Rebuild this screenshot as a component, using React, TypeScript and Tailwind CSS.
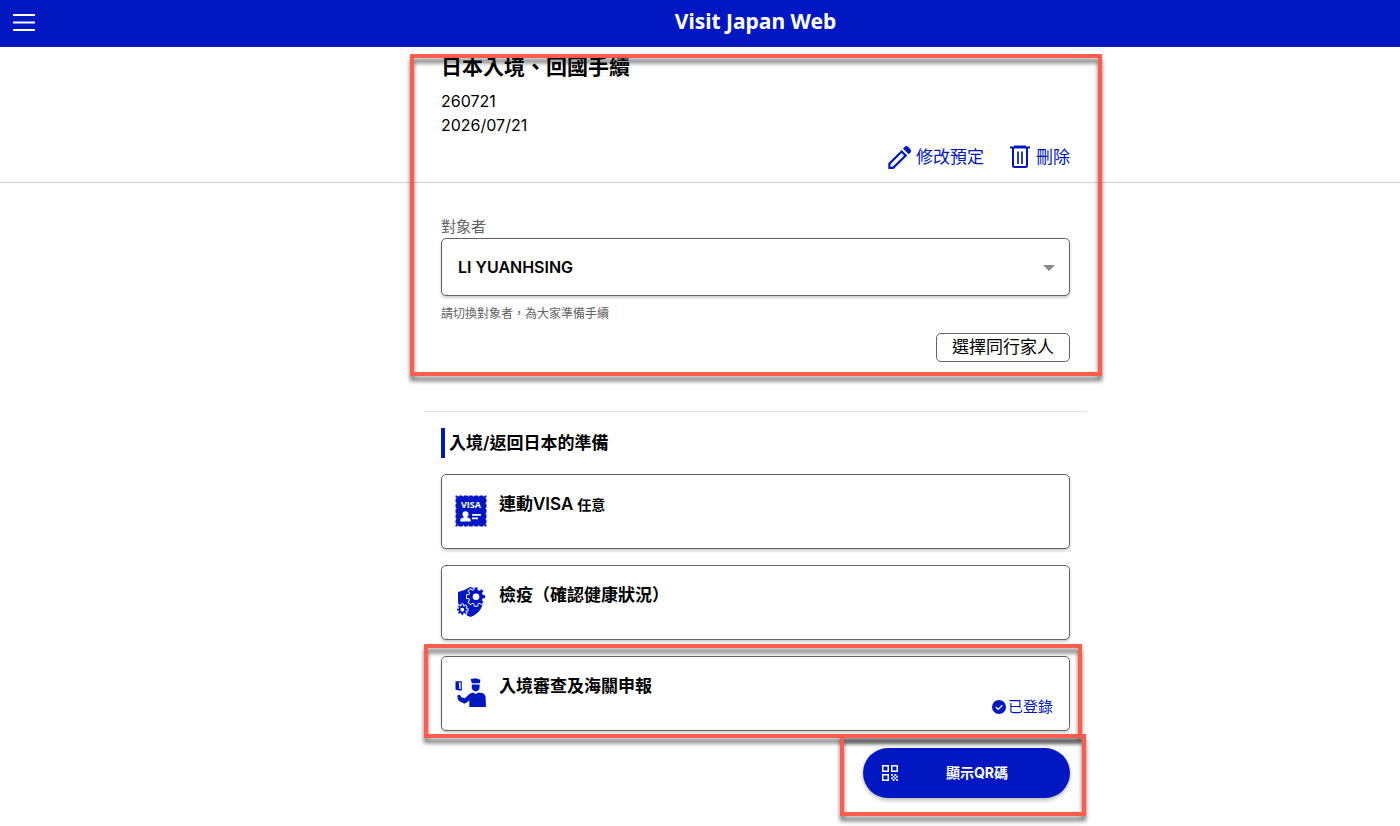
import React from "react";

const MenuIcon = () => (
  <svg width="22" height="18" viewBox="0 0 22 18" aria-hidden="true">
    <path d="M0 1h22M0 8.5h22M0 16h22" stroke="#fff" strokeWidth="2" />
  </svg>
);

const PencilIcon = () => (
  <svg width="24" height="24" viewBox="0 0 24 24" fill="none" aria-hidden="true">
    <path d="M1.4 22.8v-4L13.7 6.5l4 4L5.2 22.8z" stroke="#0017c1" strokeWidth="2.2" />
    <path d="M15 3.6l2-2q1.4-1 2.8 0l2.8 2.8q1 1.4 0 2.8l-2 2z" fill="#0017c1" />
  </svg>
);

const TrashIcon = () => (
  <svg width="20" height="24" viewBox="0 0 20 24" fill="none" aria-hidden="true">
    <path d="M0 2.5h20M4 1.5h12M3 3v17.5q0 1.5 1.5 1.5h11q1.5 0 1.5-1.5V3" stroke="#0017c1" strokeWidth="2" />
    <path d="M8 6.5v12.5M12 6.5v12.5" stroke="#0017c1" strokeWidth="1.7" />
  </svg>
);

const VisaIcon = () => (
  <svg width="32" height="32" viewBox="0 0 32 32" aria-hidden="true">
    <rect x="0.5" y="0.5" width="31" height="31" fill="#0017c1" />
    <rect
      x="0.5"
      y="0.5"
      width="31"
      height="31"
      fill="none"
      stroke="#fff"
      strokeWidth="1.8"
      strokeLinecap="round"
      strokeDasharray="0 5.166"
      strokeDashoffset="-2.58"
    />
    <text x="16" y="13" textAnchor="middle" fontSize="9" fontWeight="700" fontFamily="Open Sans, sans-serif" fill="#fff">
      VISA
    </text>
    <circle cx="10.5" cy="19.2" r="3" fill="#fff" />
    <path d="M9 20h3v2.3l3 1.3q.8.5.8 2.9H5.2q0-2.4.8-2.9l3-1.3z" fill="#fff" />
    <path d="M17 19.8h9M17 23.3h6" stroke="#fff" strokeWidth="1.7" />
  </svg>
);

// closed outline of a cog with square teeth
const gearPath = (cx: number, cy: number, inner: number, outer: number, teeth: number) => {
  const points: string[] = [];
  const step = (Math.PI * 2) / teeth;
  for (let i = 0; i < teeth; i++) {
    const a = i * step;
    [
      [inner, -0.3],
      [outer, -0.2],
      [outer, 0.2],
      [inner, 0.3],
    ].forEach(([r, k]) => {
      points.push(`${(cx + r * Math.cos(a + k * step)).toFixed(2)} ${(cy + r * Math.sin(a + k * step)).toFixed(2)}`);
    });
  }
  return `M${points.join("L")}Z`;
};

const ShieldIcon = () => {
  const bigGear = gearPath(21, 10.7, 7, 9.2, 8);
  const smallGear = gearPath(7.3, 23.7, 3.8, 5.4, 8);
  return (
    <svg width="32" height="32" viewBox="0 0 32 32" fill="#0017c1" aria-hidden="true">
      <path d="M3 6Q10 4.5 15.5.8 21 4.5 28 6v8q0 12-12.5 17Q3 26 3 14z" />
      <path d={bigGear} stroke="#fff" strokeWidth="1.8" strokeLinejoin="round" />
      <path d={bigGear} />
      <circle cx="21" cy="10.7" r="3.3" fill="#fff" />
      <path d={smallGear} stroke="#fff" strokeWidth="1.8" strokeLinejoin="round" />
      <path d={smallGear} />
      <circle cx="7.3" cy="23.7" r="1.9" fill="#fff" />
    </svg>
  );
};

const OfficerIcon = () => (
  <svg width="32" height="32" viewBox="0 -2 32 32" fill="#0017c1" aria-hidden="true">
    <path d="M15.7 0l5-.8 4.8 1.5-.7 3.600h-8z" />
    <path d="M16.8 5.4h7.800v3.200q-.5 3.800-3.900 3.800t-3.900-3.800z" />
    <path d="M2.3 16.500l2.500-.7 1.500 2.500 3.500 1 5-4.500q1.500-1.200 3.200-1.400l2.700 1.600 2.800-1.600 3.500.7q3.200 1 3.600 3.900l.4 10H14.300v-6.500l-3.300 2.500q-1.200.7-2.500.2l-4.500-2.200q-1.700-1.500-1.700-5.500z" />
    <path d="M.5 2.300h6.300v9.200H3.500l-3-1z" />
    <path d="M3.800 3.500h1.800v6.500H4.300z" fill="#fff" />
  </svg>
);

const CheckIcon = () => (
  <svg width="14" height="14" viewBox="0 0 14 14" fill="none" aria-hidden="true">
    <circle cx="7" cy="7" r="7" fill="#0017c1" />
    <path d="M3.8 7l2.4 2.4 4.2-4.3" stroke="#fff" strokeWidth="1.3" />
  </svg>
);

const QrIcon = () => (
  <svg width="16" height="16" viewBox="0 0 16 16" fill="none" aria-hidden="true">
    <path d="M.75.75h5.5v5.5h-5.5zM9.75.75h5.5v5.5h-5.5zM.75 9.75h5.5v5.5h-5.5z" stroke="#fff" strokeWidth="1.5" />
    <path
      d="M9 9h1.75v1.75H9zM12.5 9h1.75v1.75H12.5zM10.75 10.75h1.75v1.75h-1.75zM14.25 10.75H16v1.75h-1.75zM9 12.5h1.75v1.75H9zM12.5 12.5h1.75v1.75H12.5zM10.75 14.25h1.75V16h-1.75zM14.25 14.25H16V16h-1.75z"
      fill="#fff"
    />
  </svg>
);

const CALLOUT =
  "pointer-events-none absolute border-4 border-[#ff5c4d] [filter:drop-shadow(0_5px_2px_rgba(0,0,0,0.55))]";

type TaskCardProps = {
  icon: React.ReactNode;
  title: string;
  note?: string;
  done?: boolean;
};

const TaskCard = ({ icon, title, note, done }: TaskCardProps) => (
  <button
    type="button"
    className="flex min-h-[75px] w-full items-start gap-3 rounded-[5px] border border-[#626264] bg-white pt-[18px] pr-4 pl-[13px] text-left shadow-[0_2px_3px_rgba(0,0,0,0.2)]"
  >
    <span className="mt-0.5 shrink-0">{icon}</span>
    <span className="flex flex-1 flex-col">
      <span className="text-[17px] leading-[22px] font-semibold">
        {title}
        {note && <span className="ml-1 text-[14px]">{note}</span>}
      </span>
      {done && (
        <span className="flex items-center justify-end gap-0.5 text-[15px] leading-5 text-[#0017c1]">
          <CheckIcon />
          已登錄
        </span>
      )}
    </span>
  </button>
);

const App = () => {
  return (
    <div
      lang="zh-Hant"
      className="min-h-screen overflow-x-hidden bg-white pb-7 font-['Inter','Noto_Sans_CJK_TC',sans-serif] text-black"
    >
      <header className="flex h-[47px] items-center bg-[#0017c1] pl-[13px]">
        <button type="button" aria-label="Menu" className="w-[98px] pb-0.5">
          <MenuIcon />
        </button>
        <p className="flex-1 pb-1.5 text-center font-['Noto_Sans',sans-serif] text-[21px] leading-7 font-bold text-white">
          Visit Japan Web
        </p>
      </header>

      <main>
        <section className="border-b border-[#d0d0d0] pl-[111px]">
          <div className="mx-auto max-w-[663px] px-[17px] pt-1.5 pb-[13px]">
            <h1 className="text-[21px] leading-7 font-bold">日本入境、回國手續</h1>
            <div className="mt-2 text-base leading-6">
              <p>260721</p>
              <p>2026/07/21</p>
            </div>
            <div className="mt-2 flex justify-end gap-[26px] text-[17px] leading-6 text-[#0017c1]">
              <a href="#edit" className="flex items-center gap-1">
                <PencilIcon />
                修改預定
              </a>
              <a href="#delete" className="flex items-center gap-1.5">
                <TrashIcon />
                刪除
              </a>
            </div>
          </div>
        </section>

        <div className="pl-[111px]">
          <section className="relative mx-auto max-w-[663px] border-b border-[#e0e0e0] px-[17px] pt-[34px] pb-[49px]">
            <label htmlFor="person" className="block text-[15px] leading-5 text-[#626264]">
              對象者
            </label>
            <div className="relative mt-px">
              <select
                id="person"
                className="h-[58px] w-full appearance-none rounded-[5px] border border-[#626264] bg-white px-4 text-base font-semibold shadow-[0_2px_3px_rgba(0,0,0,0.2)]"
              >
                <option>LI YUANHSING</option>
              </select>
              <svg
                width="12"
                height="6"
                viewBox="0 0 12 6"
                className="pointer-events-none absolute top-[27px] right-[15px]"
                aria-hidden="true"
              >
                <path d="M0 0h12L6 6z" fill="#8a8a8a" />
              </svg>
            </div>
            <p className="mt-2 text-[12px] leading-5 text-[#626264]">請切換對象者，為大家準備手續</p>
            <div className="mt-[9px] flex justify-end">
              <button
                type="button"
                className="rounded-[5px] border border-[#626264] px-[15px] text-[17px] leading-[27px]"
              >
                選擇同行家人
              </button>
            </div>
            <div className={`${CALLOUT} -top-[129px] -right-[15px] bottom-[35px] -left-[14px]`} />
          </section>

          <section className="mx-auto max-w-[663px] px-[17px] pt-4">
            <h2 className="border-l-4 border-[#0017c1] pl-1 text-[17px] leading-[30px] font-semibold">
              入境/返回日本的準備
            </h2>
            <ul className="mt-4 flex flex-col gap-4">
              <li>
                <TaskCard icon={<VisaIcon />} title="連動VISA" note="任意" />
              </li>
              <li>
                <TaskCard icon={<ShieldIcon />} title="檢疫（確認健康狀況）" />
              </li>
              <li className="relative">
                <TaskCard icon={<OfficerIcon />} title="入境審查及海關申報" done />
                <div className={`${CALLOUT} -top-3 -right-3 -bottom-[7px] -left-[17px]`} />
              </li>
            </ul>
            <div className="mt-[17px] flex justify-end">
              <div className="relative">
                <button
                  type="button"
                  className="flex h-[50px] w-[207px] items-center rounded-full bg-[#0017c1] pr-3.5 pl-[19px] text-white shadow-[0_2px_4px_rgba(0,0,0,0.3)]"
                >
                  <QrIcon />
                  <span className="flex-1 text-center text-[14px] leading-5 font-bold">顯示QR碼</span>
                </button>
                <div className={`${CALLOUT} -top-3.5 -right-4 -bottom-[18px] -left-[23px]`} />
              </div>
            </div>
          </section>
        </div>
      </main>
    </div>
  );
};

export default App;
